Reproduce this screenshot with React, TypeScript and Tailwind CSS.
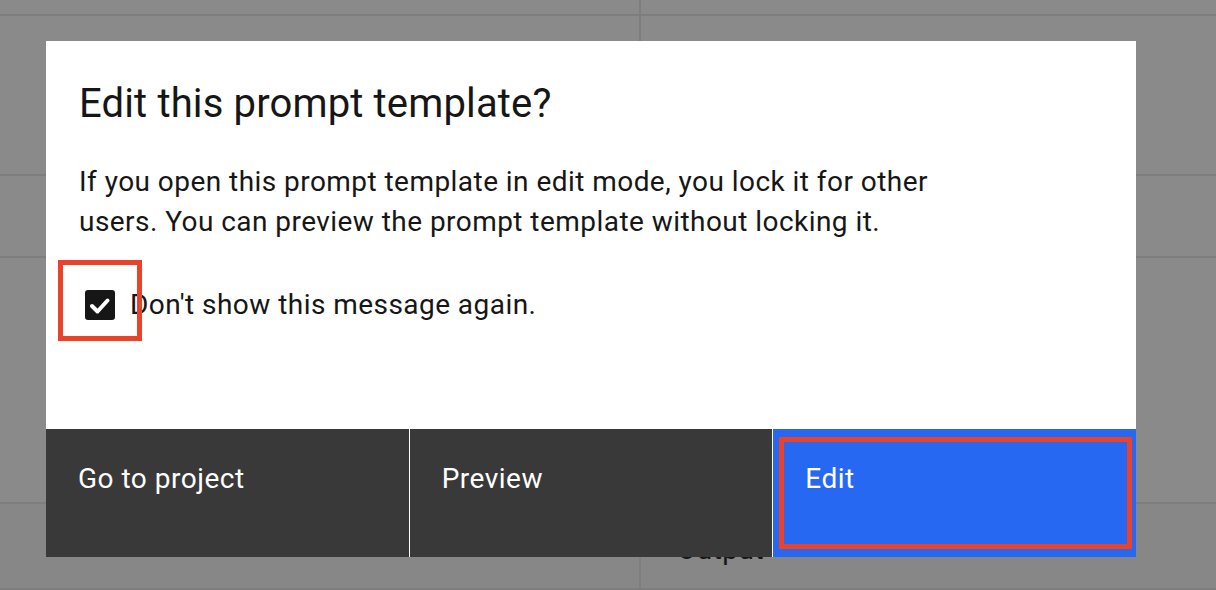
import React from "react";

function BgRow({ h, last, children }: { h: string; last?: boolean; children?: React.ReactNode }) {
  return (
    <div className={`flex border-b-2 border-[#7e7e7e] ${h} ${last ? "bg-[#878787]" : ""}`}>
      <div className="w-[641px] shrink-0 border-r-2 border-[#7e7e7e]" />
      <div className="flex-1">{children}</div>
    </div>
  );
}

export default function App() {
  return (
    <div
      className="relative w-[1216px] h-[590px] overflow-hidden bg-[#8a8a8a] text-[#161616]"
      style={{ fontFamily: "Roboto, 'Liberation Sans', sans-serif" }}
    >
      {/* underlying page seen through the overlay */}
      <div className="flex flex-col">
        <BgRow h="h-[16px]" />
        <BgRow h="h-[160px]" />
        <BgRow h="h-[82px]" />
        <BgRow h="h-[246px]" />
        <BgRow h="h-[86px]" last>
          <div className="pl-[36px] pt-[26px] text-[28px] leading-[40px] tracking-[0.5px]">Output</div>
        </BgRow>
      </div>

      {/* modal */}
      <div className="absolute left-[46px] top-[41px] w-[1090px] h-[516px] bg-white flex flex-col">
        <div className="pl-[33px] pt-[35px]">
          <h2 className="text-[40px] leading-[56px] tracking-[0.15px] font-normal">Edit this prompt template?</h2>
          <p className="mt-[30px] text-[28px] leading-[40px] tracking-[0.45px]">
            If you open this prompt template in edit mode, you lock it for other
            <br />
            users. You can preview the prompt template without locking it.
          </p>
          <label className="mt-[43px] flex items-center gap-[15px]">
            <span className="ml-[6px] w-[30px] h-[30px] rounded-[3px] bg-[#161616] flex items-center justify-center">
              <svg width="30" height="30" viewBox="0 0 30 30" fill="none">
                <path d="M7 16 L12.5 21.5 L22.5 10.5" stroke="#ffffff" strokeWidth="4" strokeLinecap="round" strokeLinejoin="round" />
              </svg>
            </span>
            <span className="text-[28px] leading-[40px] tracking-[0.45px]">Don't show this message again.</span>
          </label>
        </div>

        <div className="mt-auto h-[128px] flex gap-px">
          <button className="flex-1 bg-[#393939] text-white text-left pl-[32px] pt-[30px] flex items-start text-[28px] leading-[40px] tracking-[0.5px]">
            Go to project
          </button>
          <button className="flex-1 bg-[#393939] text-white text-left pl-[32px] pt-[30px] flex items-start text-[28px] leading-[40px] tracking-[0.5px]">
            Preview
          </button>
          <button className="flex-1 bg-[#2768f3] text-white text-left pl-[32px] pt-[30px] flex items-start text-[28px] leading-[40px] tracking-[0.5px]">
            Edit
          </button>
        </div>

        {/* annotation highlights */}
        <div className="absolute left-[12px] top-[219px] w-[84px] h-[81px] border-[5px] border-[#e9432b]" />
        <div className="absolute left-[733px] top-[396px] w-[353px] h-[112px] border-[5px] border-[#e9432b]" />
      </div>
    </div>
  );
}
